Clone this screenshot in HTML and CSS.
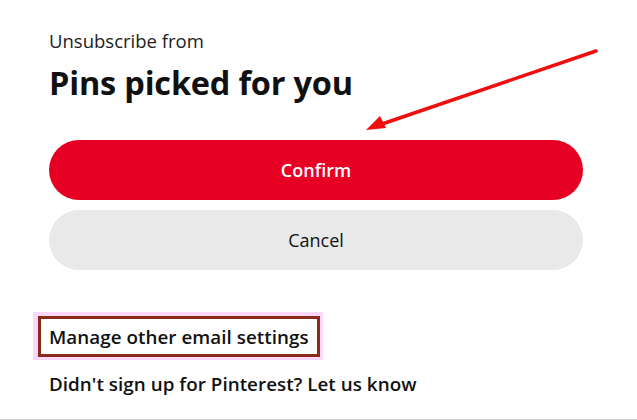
FILE: index.html
```html
<!DOCTYPE html>
<html>
<head>
<meta charset="utf-8">
<link rel="stylesheet" href="styles.css">
</head>
<body>
<div class="page">
  <div class="header">
    <div class="sub">Unsubscribe from</div>
    <h1 class="title">Pins picked for you</h1>
  </div>
  <div class="buttons">
    <button class="btn btn-primary">Confirm</button>
    <button class="btn btn-secondary">Cancel</button>
  </div>
  <div class="links">
    <div class="highlight">
      <div class="outlined"><a class="link">Manage other email settings</a></div>
    </div>
    <a class="link link-plain">Didn't sign up for Pinterest? Let us know</a>
  </div>
</div>
<svg class="arrow" width="637" height="420" viewBox="0 0 637 420">
  <line x1="596" y1="51" x2="382" y2="124" stroke="#f00d0d" stroke-width="3.5" stroke-linecap="round"/>
  <polygon points="366,130 380,116 386,128" fill="#f00d0d"/>
</svg>
</body>
</html>
```
FILE: styles.css
```css
html, body {
  margin: 0;
  padding: 0;
  background: #fff;
}
body {
  width: 637px;
  height: 420px;
  overflow: hidden;
  position: relative;
  font-family: "Open Sans", "Noto Sans", sans-serif;
  color: #111;
  border-bottom: 1px solid #cfcfcf;
  box-sizing: border-box;
}
.page {
  padding: 29px 54px 0 49px;
  display: flex;
  flex-direction: column;
}
.sub {
  font-size: 18.5px;
  line-height: 24px;
  color: #222;
}
.title {
  margin: 8px 0 0 0;
  font-size: 32.5px;
  line-height: 44px;
  font-weight: 700;
  letter-spacing: -0.2px;
}
.buttons {
  margin-top: 35px;
  display: flex;
  flex-direction: column;
  gap: 10px;
}
.btn {
  height: 60px;
  border: none;
  border-radius: 30px;
  font-family: inherit;
  font-size: 18px;
  font-weight: 600;
  cursor: pointer;
}
.btn-primary {
  background: #e60023;
  color: #fff;
}
.btn-secondary {
  background: #e9e9e9;
  color: #111;
  font-weight: 500;
}
.links {
  margin-top: 42px;
  margin-left: -16px;
  display: flex;
  flex-direction: column;
}
.highlight {
  align-self: flex-start;
  background: #fbd7fb;
  padding: 4px 3px 3px 5px;
}
.outlined {
  border: 3px solid #8a2a1a;
  background: #fff;
  padding: 6px 8px 5px 8px;
}
.link {
  font-size: 18.8px;
  line-height: 24px;
  font-weight: 600;
  color: #111;
  letter-spacing: 0.05px;
}
.link-plain {
  margin-left: 16px;
  margin-top: 12px;
}
.arrow {
  position: absolute;
  left: 0;
  top: 0;
  pointer-events: none;
}
```
